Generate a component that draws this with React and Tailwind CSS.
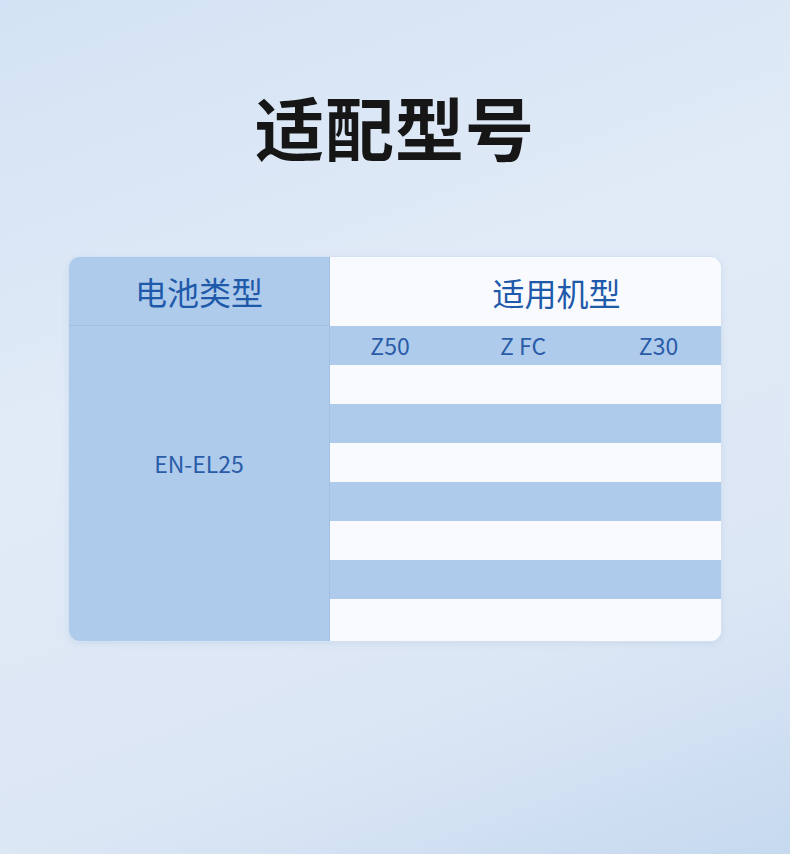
import React from "react";

const models = ["Z50", "Z FC", "Z30"];
const stripes = ["white", "blue", "white", "blue", "white", "blue", "white"];

export default function App() {
  return (
    <div
      className="w-[790px] h-[854px] overflow-hidden bg-[linear-gradient(160deg,#d3e2f4_0%,#e1ebf7_40%,#dce7f5_75%,#c6d9ef_100%)] flex flex-col items-center"
      style={{ fontFamily: '"Noto Sans CJK SC", "Noto Sans", sans-serif' }}
    >
      {/* Title */}
      <h1 className="mt-[82px] h-[88px] text-[69px] leading-[88px] font-bold text-[#161616] tracking-[1px]">
        适配型号
      </h1>

      {/* Table */}
      <div className="mt-[86px] w-[654px] h-[386px] rounded-[12px] overflow-hidden flex border border-[#d4e1f2] shadow-[0_2px_6px_rgba(120,150,190,0.15)]">
        {/* Battery column */}
        <div className="w-[261px] flex flex-col bg-[#afcbec] border-r border-[#a3c0e4]">
          <div className="h-[69px] flex items-center justify-center border-b border-[#a3c0e4]">
            <span className="text-[32px] font-normal text-[#1f5aaa]">电池类型</span>
          </div>
          <div className="flex-1 flex items-center justify-center pb-[40px]">
            <span className="text-[23px] text-[#2a5ca8]">EN-EL25</span>
          </div>
        </div>

        {/* Models column */}
        <div className="flex-1 flex flex-col bg-[#f8fafe]">
          <div className="h-[69px] flex items-center justify-center pl-[62px]">
            <span className="text-[32px] font-normal text-[#1f5aaa]">适用机型</span>
          </div>
          <div className="h-[39px] flex items-center bg-[#afcbec]">
            <span className="w-[120px] text-center text-[23px] text-[#2a5ca8]">Z50</span>
            <span className="w-[146px] text-center text-[23px] text-[#2a5ca8]">Z FC</span>
            <span className="flex-1 text-center text-[23px] text-[#2a5ca8]">Z30</span>
          </div>
          {stripes.map((s, i) => (
            <div
              key={i}
              className={
                i === stripes.length - 1
                  ? "flex-1 bg-[#f8fafe]"
                  : s === "blue"
                  ? "h-[39px] bg-[#afcbec]"
                  : "h-[39px] bg-[#f8fafe]"
              }
            />
          ))}
        </div>
      </div>
    </div>
  );
}
